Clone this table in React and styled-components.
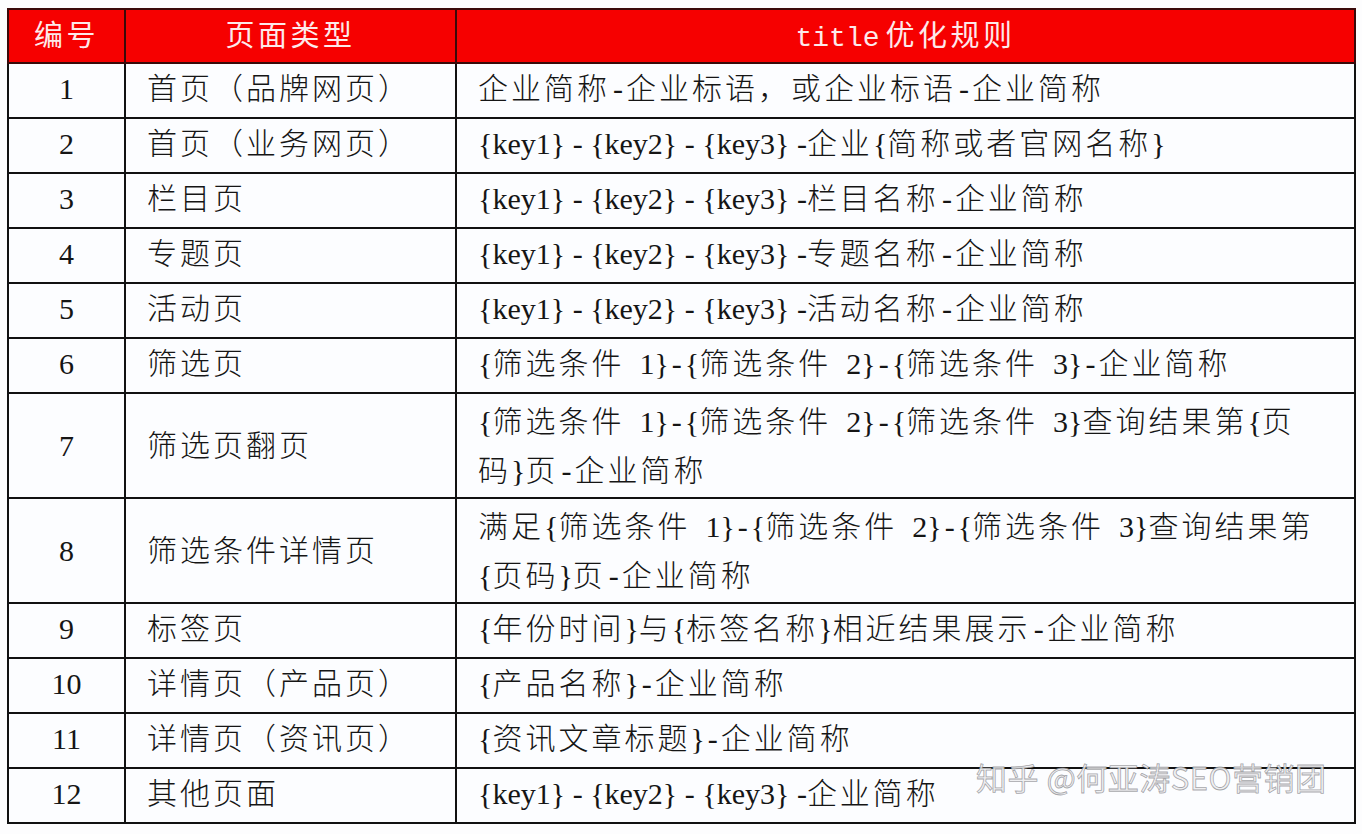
import React from "react";
import styled, { createGlobalStyle } from "styled-components";

const Global = createGlobalStyle`
  html, body { margin: 0; padding: 0; background: #fdfdfe; }
  body { font-family: "Noto Sans CJK SC", "Liberation Sans", sans-serif; }
`;

const Page = styled.div`
  position: relative;
  width: 1362px;
  height: 834px;
  padding: 8px 0 0 7px;
  box-sizing: border-box;
`;

const Table = styled.table`
  border-collapse: collapse;
  width: 1347px;
  table-layout: fixed;
  font-family: "Noto Sans CJK SC", sans-serif;
  font-size: 30px;
  color: #151515;
  background: #fcfdff;
`;

const Col = styled.col`
  width: ${(p) => p.$w}px;
`;

const HeadCell = styled.th`
  background: #f60000;
  color: #fde9ea;
  font-weight: 400;
  font-family: "Noto Sans CJK SC", sans-serif;
  font-size: 29px;
  letter-spacing: 3.5px;
  height: 46px;
  line-height: 44px;
  padding: 0 0 6px;
  border: 2px solid #3a0a0a;
  text-align: center;
  vertical-align: middle;
`;

const Mono = styled.span`
  font-family: "Liberation Mono", monospace;
  font-size: 28px;
  line-height: 1;
  letter-spacing: 0;
  margin-right: 6px;
`;

const Row = styled.tr`
  height: ${(p) => (p.$tall ? 105 : 55)}px;
`;

const Cell = styled.td`
  border: 2px solid #111;
  padding: 0 10px ${(p) => (p.$tall ? 4 : 9)}px ${(p) => (p.$center ? 10 : 21)}px;
  text-align: ${(p) => (p.$center ? "center" : "left")};
  vertical-align: middle;
  line-height: ${(p) => (p.$tall ? 49 : 42)}px;
  font-weight: 300;
  letter-spacing: 3px;
  white-space: nowrap;
`;

const Latin = styled.span`
  font-family: "Liberation Serif", serif;
  font-weight: 400;
  letter-spacing: 0;
  line-height: 1;
`;

const Dash = styled.span`
  display: inline-block;
  width: 16px;
  text-align: center;
  font-family: "Liberation Serif", serif;
  font-weight: 400;
  letter-spacing: 0;
  line-height: 1;
`;

const Num = styled.span`
  font-family: "Liberation Serif", serif;
  font-size: 30px;
  letter-spacing: 0;
  line-height: 1;
`;

const Watermark = styled.div`
  position: absolute;
  left: 976px;
  top: 754px;
  font-family: "Noto Sans CJK SC", "Liberation Sans", sans-serif;
  font-size: 31px;
  letter-spacing: 0.5px;
  color: rgba(238, 238, 240, 0.88);
  -webkit-text-stroke: 0.8px rgba(130, 130, 135, 0.7);
  white-space: nowrap;
  pointer-events: none;
`;

const splitter = /([\u3000-\u303f\u4e00-\u9fff\uff00-\uffef]+|-)/;
const cjkRun = /^[\u3000-\u303f\u4e00-\u9fff\uff00-\uffef]+$/;

function Text({ children }) {
  const tokens = children.split(splitter).filter(Boolean);
  return tokens.map((t, i) => {
    if (t === "-") {
      const prev = tokens[i - 1] || "";
      return prev.endsWith(" ") ? <Latin key={i}>-</Latin> : <Dash key={i}>-</Dash>;
    }
    if (cjkRun.test(t)) return <React.Fragment key={i}>{t}</React.Fragment>;
    return <Latin key={i}>{t}</Latin>;
  });
}

const S = "\u2002";

const rows = [
  ["1", "首页（品牌网页）", "企业简称-企业标语，或企业标语-企业简称"],
  ["2", "首页（业务网页）", "{key1} - {key2} - {key3} -企业{简称或者官网名称}"],
  ["3", "栏目页", "{key1} - {key2} - {key3} -栏目名称-企业简称"],
  ["4", "专题页", "{key1} - {key2} - {key3} -专题名称-企业简称"],
  ["5", "活动页", "{key1} - {key2} - {key3} -活动名称-企业简称"],
  ["6", "筛选页", `{筛选条件${S}1}-{筛选条件${S}2}-{筛选条件${S}3}-企业简称`],
  ["7", "筛选页翻页", [`{筛选条件${S}1}-{筛选条件${S}2}-{筛选条件${S}3}查询结果第{页`, "码}页-企业简称"]],
  ["8", "筛选条件详情页", [`满足{筛选条件${S}1}-{筛选条件${S}2}-{筛选条件${S}3}查询结果第`, "{页码}页-企业简称"]],
  ["9", "标签页", "{年份时间}与{标签名称}相近结果展示-企业简称"],
  ["10", "详情页（产品页）", "{产品名称}-企业简称"],
  ["11", "详情页（资讯页）", "{资讯文章标题}-企业简称"],
  ["12", "其他页面", "{key1} - {key2} - {key3} -企业简称"],
];

export default function App() {
  return (
    <Page>
      <Global />
      <Table>
        <colgroup>
          <Col $w={117} />
          <Col $w={331} />
          <Col $w={899} />
        </colgroup>
        <thead>
          <tr>
            <HeadCell>编号</HeadCell>
            <HeadCell>页面类型</HeadCell>
            <HeadCell>
              <Mono>title</Mono>优化规则
            </HeadCell>
          </tr>
        </thead>
        <tbody>
          {rows.map(([n, type, rule]) => {
            const tall = Array.isArray(rule);
            return (
              <Row key={n} $tall={tall}>
                <Cell $center $tall={tall}>
                  <Num>{n}</Num>
                </Cell>
                <Cell $tall={tall}>
                  <Text>{type}</Text>
                </Cell>
                <Cell $tall={tall}>
                  {tall ? (
                    <>
                      <Text>{rule[0]}</Text>
                      <br />
                      <Text>{rule[1]}</Text>
                    </>
                  ) : (
                    <Text>{rule}</Text>
                  )}
                </Cell>
              </Row>
            );
          })}
        </tbody>
      </Table>
      <Watermark>知乎 @何亚涛SEO营销团</Watermark>
    </Page>
  );
}
